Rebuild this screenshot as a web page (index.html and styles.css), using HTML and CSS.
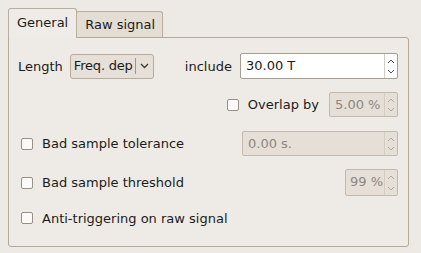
FILE: index.html
```html
<!DOCTYPE html>
<html lang="en">
<head>
  <meta charset="UTF-8">
  <title>Settings</title>
  <link rel="stylesheet" href="styles.css">
</head>
<body>
  <div class="tabs">
    <div class="tab active">General</div>
    <div class="tab">Raw signal</div>
  </div>
  <div class="panel">
    <!-- Length / include -->
    <div class="row row-length">
      <span class="label">Length</span>
      <div class="combo">
        <span class="combo-text">Freq. dep</span>
        <span class="combo-arrow">
          <svg width="9" height="6" viewBox="0 0 9 6"><path d="M1 1 L4.5 4.5 L8 1" fill="none" stroke="#3a3a3a" stroke-width="1.3"/></svg>
        </span>
      </div>
      <span class="label include">include</span>
      <div class="spin wide">
        <span class="spin-text">30.00 T</span>
        <span class="spin-arrows">
          <svg width="8" height="5" viewBox="0 0 8 5"><path d="M1 4 L4 1 L7 4" fill="none" stroke="#555" stroke-width="1"/></svg>
          <svg width="8" height="5" viewBox="0 0 8 5"><path d="M1 1 L4 4 L7 1" fill="none" stroke="#555" stroke-width="1"/></svg>
        </span>
      </div>
    </div>

    <!-- Overlap -->
    <div class="row row-overlap">
      <span class="check"></span>
      <span class="label">Overlap by</span>
      <div class="spin disabled small">
        <span class="spin-text">5.00 %</span>
        <span class="spin-arrows">
          <svg width="8" height="5" viewBox="0 0 8 5"><path d="M1 4 L4 1 L7 4" fill="none" stroke="#b0a89e" stroke-width="1"/></svg>
          <svg width="8" height="5" viewBox="0 0 8 5"><path d="M1 1 L4 4 L7 1" fill="none" stroke="#b0a89e" stroke-width="1"/></svg>
        </span>
      </div>
    </div>

    <!-- Bad sample tolerance -->
    <div class="row row-tolerance">
      <span class="check"></span>
      <span class="label">Bad sample tolerance</span>
      <div class="spin disabled tol">
        <span class="spin-text">0.00 s.</span>
        <span class="spin-arrows">
          <svg width="8" height="5" viewBox="0 0 8 5"><path d="M1 4 L4 1 L7 4" fill="none" stroke="#b0a89e" stroke-width="1"/></svg>
          <svg width="8" height="5" viewBox="0 0 8 5"><path d="M1 1 L4 4 L7 1" fill="none" stroke="#b0a89e" stroke-width="1"/></svg>
        </span>
      </div>
    </div>

    <!-- Bad sample threshold -->
    <div class="row row-threshold">
      <span class="check"></span>
      <span class="label">Bad sample threshold</span>
      <div class="spin disabled pct">
        <span class="spin-text">99 %</span>
        <span class="spin-arrows">
          <svg width="8" height="5" viewBox="0 0 8 5"><path d="M1 4 L4 1 L7 4" fill="none" stroke="#b0a89e" stroke-width="1"/></svg>
          <svg width="8" height="5" viewBox="0 0 8 5"><path d="M1 1 L4 4 L7 1" fill="none" stroke="#b0a89e" stroke-width="1"/></svg>
        </span>
      </div>
    </div>

    <!-- Anti-triggering -->
    <div class="row row-anti">
      <span class="check"></span>
      <span class="label">Anti-triggering on raw signal</span>
    </div>
  </div>
</body>
</html>
```

FILE: styles.css
```css
body {
  margin: 0;
  background: #edeae5;
  font-family: "DejaVu Sans", sans-serif;
  font-size: 13px;
  color: #1b1b1b;
  width: 421px;
  height: 253px;
  overflow: hidden;
  white-space: nowrap;
}
.tabs {
  display: flex;
  align-items: flex-end;
  padding: 8px 0 0 8px;
  height: 37px;
  box-sizing: border-box;
  position: relative;
  z-index: 1;
}
.tab {
  box-sizing: border-box;
  height: 26px;
  padding: 0 7px 0 8px;
  line-height: 25px;
  border: 1px solid #b9ae9f;
  border-bottom: none;
  border-radius: 3px 3px 0 0;
  background: #e3ddd4;
  margin-left: -1px;
}
.tab.active {
  height: 30px;
  line-height: 28px;
  margin-left: 0;
  padding: 0 8px 0 8px;
  background: #efece7;
  margin-bottom: -1px;
}
.panel {
  box-sizing: border-box;
  margin: 0 12px 0 8px;
  height: 210px;
  border: 1px solid #b4a897;
  border-radius: 0 3px 3px 3px;
  background: #eeebe6;
  padding: 15px 10px 0 9px;
}
.row {
  display: flex;
  align-items: center;
}
.row-length {
  height: 26px;
}
.row-length .label {
  margin-right: 7px;
}
.row-length .include {
  margin: 0 8px 0 31px;
}
.combo {
  box-sizing: border-box;
  width: 84px;
  height: 25px;
  display: flex;
  align-items: center;
  border: 1px solid #b6ab9d;
  border-radius: 3px;
  background: #e6e0d8;
  padding-left: 3px;
}
.combo-text {
  width: 61px;
  overflow: hidden;
  letter-spacing: -0.2px;
  border-right: 1px solid #9f968b;
  line-height: 16px;
}
.combo-arrow {
  display: flex;
  align-items: center;
  padding-left: 4px;
}
.spin {
  box-sizing: border-box;
  height: 26px;
  display: flex;
  align-items: stretch;
  border: 1px solid #a69c90;
  border-radius: 2px;
  background: #ffffff;
}
.spin-text {
  flex: 1;
  padding-left: 5px;
  line-height: 24px;
  overflow: hidden;
}
.spin-arrows {
  width: 12px;
  flex: none;
  border-left: 1px solid #d4cdc3;
  display: flex;
  flex-direction: column;
  justify-content: space-between;
  align-items: center;
  padding: 5px 0 4px;
}
.spin.wide {
  width: 158px;
}
.spin.disabled {
  background: #e5dfd7;
  border-color: #c3b9ac;
  color: #8d8780;
  height: 25px;
}
.spin.small {
  width: 69px;
}
.spin.tol {
  width: 156px;
  margin-left: auto;
}
.spin.pct {
  width: 53px;
  height: 27px;
  margin-left: auto;
}
.spin.pct .spin-text {
  padding-left: 4px;
}
.check {
  box-sizing: border-box;
  width: 12px;
  height: 12px;
  border: 1px solid #9a8f84;
  border-radius: 2px;
  background: #fbfaf8;
  margin-right: 9px;
}
.row-overlap {
  height: 25px;
  margin-top: 13px;
  justify-content: flex-end;
}
.row-overlap .label {
  margin-right: 10px;
}
.row-tolerance {
  margin-top: 14px;
  height: 25px;
  padding-left: 3px;
}
.row-threshold {
  margin-top: 13px;
  height: 27px;
  padding-left: 3px;
}
.row-anti {
  margin-top: 16px;
  height: 12px;
  padding-left: 3px;
}
```
